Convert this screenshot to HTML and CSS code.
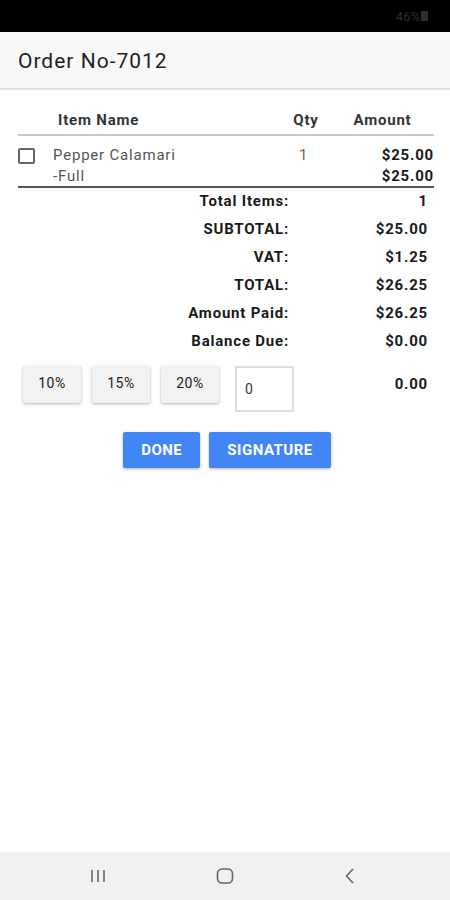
FILE: index.html
```html
<!DOCTYPE html>
<html lang="en">
<head>
  <meta charset="UTF-8">
  <meta name="viewport" content="width=device-width, initial-scale=1.0">
  <title>Order No-7012</title>
  <link rel="stylesheet" href="styles.css">
</head>
<body>
  <div class="status-bar">
    <span class="battery-text">46%</span>
    <span class="battery"></span>
  </div>

  <div class="app-bar">
    <h1>Order No-7012</h1>
  </div>

  <div class="main">
    <div class="order-table">
      <div class="table-head">
        <span></span>
        <span class="col-name">Item Name</span>
        <span class="col-qty">Qty</span>
        <span class="col-amount">Amount</span>
      </div>
      <div class="table-row">
        <span class="check"></span>
        <span class="item-name">Pepper Calamari</span>
        <span class="item-qty">1</span>
        <span class="item-amount">$25.00</span>
        <span></span>
        <span class="item-name">-Full</span>
        <span></span>
        <span class="item-amount">$25.00</span>
      </div>
    </div>

    <div class="totals">
      <span class="label">Total Items:</span><span class="value">1</span>
      <span class="label">SUBTOTAL:</span><span class="value">$25.00</span>
      <span class="label">VAT:</span><span class="value">$1.25</span>
      <span class="label">TOTAL:</span><span class="value">$26.25</span>
      <span class="label">Amount Paid:</span><span class="value">$26.25</span>
      <span class="label">Balance Due:</span><span class="value">$0.00</span>
    </div>

    <div class="tip-row">
      <button class="tip-btn">10%</button>
      <button class="tip-btn">15%</button>
      <button class="tip-btn">20%</button>
      <input class="tip-input" type="text" value="0">
      <span class="tip-value">0.00</span>
    </div>

    <div class="actions">
      <button class="action-btn">DONE</button>
      <button class="action-btn">SIGNATURE</button>
    </div>
  </div>

  <div class="nav-bar">
    <svg width="18" height="16" viewBox="0 0 18 16"><path d="M3 2v12M9 2v12M15 2v12" stroke="#666" stroke-width="1.6" fill="none"/></svg>
    <svg width="20" height="18" viewBox="0 0 20 18"><rect x="2.5" y="2" width="15" height="14" rx="4.5" stroke="#666" stroke-width="1.6" fill="none"/></svg>
    <svg width="14" height="18" viewBox="0 0 14 18"><path d="M10 2L3.5 9L10 16" stroke="#666" stroke-width="1.6" fill="none"/></svg>
  </div>
</body>
</html>
```

FILE: styles.css
```css
* {
  box-sizing: border-box;
}

html, body {
  margin: 0;
  height: 900px;
}

body {
  font-family: Roboto, "Liberation Sans", Arial, sans-serif;
  background-color: #fff;
  color: #222;
  display: flex;
  flex-direction: column;
}

.status-bar {
  height: 32px;
  background-color: #000;
  display: flex;
  align-items: center;
  justify-content: flex-end;
  padding-right: 22px;
  gap: 1px;
}

.battery-text {
  color: #2e2e2e;
  font-size: 13px;
}

.battery {
  width: 7px;
  height: 10px;
  background-color: #2e2e2e;
}

.app-bar {
  height: 58px;
  background-color: #f8f8f8;
  border-bottom: 2px solid #e2e2e2;
  display: flex;
  align-items: center;
  padding-left: 18px;
}

.app-bar h1 {
  margin: 0;
  font-size: 21px;
  font-weight: 400;
  color: #1e1e1e;
  letter-spacing: 1px;
  padding-top: 1px;
}

.main {
  flex: 1;
  padding: 0 16px 0 18px;
  letter-spacing: 0.8px;
}

.order-table {
  margin-top: 21px;
}

.table-head,
.table-row {
  display: grid;
  grid-template-columns: 35px 1fr 50px 103px;
}

.table-head {
  font-size: 15px;
  font-weight: 700;
  color: #333;
  padding-bottom: 5px;
  border-bottom: 2px solid #c8c8c8;
}

.col-name {
  padding-left: 5px;
}

.col-qty,
.col-amount {
  text-align: center;
}

.table-row {
  padding-top: 10px;
  border-bottom: 2px solid #555;
  row-gap: 2px;
  line-height: 19px;
}

.check {
  width: 17px;
  height: 16px;
  border: 2px solid #666;
  border-radius: 2px;
  margin-top: 2px;
}

.item-name {
  font-size: 15px;
  color: #555;
}

.item-qty {
  font-size: 15px;
  color: #666;
  text-align: center;
  padding-right: 5px;
}

.item-amount {
  font-size: 15px;
  font-weight: 700;
  color: #1a1a1a;
  text-align: right;
}

.totals {
  display: grid;
  grid-template-columns: 1fr 139px;
  padding-right: 6px;
  margin-top: -1px;
  font-size: 15px;
  font-weight: 700;
  color: #1a1a1a;
}

.totals span {
  height: 28px;
  line-height: 28px;
  text-align: right;
}

.tip-row {
  display: flex;
  align-items: flex-start;
  margin-top: 11px;
  padding-left: 5px;
  padding-right: 6px;
}

.tip-btn {
  width: 58px;
  height: 37px;
  margin-right: 11px;
  border: none;
  border-radius: 2px;
  background-color: #f2f2f2;
  box-shadow: 0 1px 3px rgba(0, 0, 0, 0.3);
  font-family: inherit;
  font-size: 14px;
  letter-spacing: 0.5px;
  color: #222;
  padding-bottom: 4px;
}

.tip-btn:nth-child(3) {
  margin-right: 16px;
}

.tip-input {
  width: 59px;
  height: 46px;
  border: 2px solid #ddd;
  font-family: inherit;
  font-size: 14px;
  color: #333;
  padding-left: 8px;
  padding-top: 0;
}

.tip-value {
  margin-left: auto;
  font-size: 15px;
  font-weight: 700;
  color: #1a1a1a;
  line-height: 36px;
}

.actions {
  display: flex;
  justify-content: center;
  gap: 9px;
  margin-top: 20px;
  padding-left: 2px;
}

.action-btn {
  height: 36px;
  padding: 0 18px;
  border: none;
  border-radius: 2px;
  background-color: #4286f5;
  box-shadow: 0 1px 3px rgba(0, 0, 0, 0.3);
  color: #fff;
  font-family: inherit;
  font-size: 15px;
  font-weight: 700;
  letter-spacing: 0.5px;
}

.nav-bar {
  height: 48px;
  background-color: #f1f1f1;
  display: flex;
  align-items: center;
  padding-left: 89px;
  gap: 108px;
}
```
